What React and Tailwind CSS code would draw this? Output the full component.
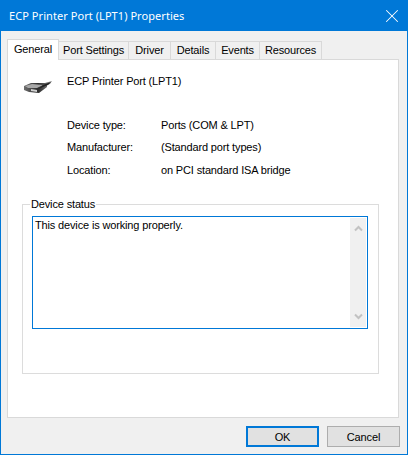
import { X } from "lucide-react";

const TABS = ["Port Settings", "Driver", "Details", "Events", "Resources"];
const TAB_WIDTHS = ["w-[70px]", "w-[42px]", "w-[45px]", "w-[44px]", "w-[62px]"];
const INFO = [
  ["Device type:", "Ports (COM & LPT)"],
  ["Manufacturer:", "(Standard port types)"],
  ["Location:", "on PCI standard ISA bridge"],
];

function PortIcon() {
  return (
    <svg width="32" height="32" viewBox="0 0 32 32" className="shrink-0">
      <defs>
        <linearGradient id="side" x1="0" y1="0" x2="1" y2="0">
          <stop offset="0" stopColor="#6e6e6e" />
          <stop offset="0.5" stopColor="#2c2c2c" />
          <stop offset="1" stopColor="#8a8a8a" />
        </linearGradient>
      </defs>
      <path d="M1 12 L8 9 L22 9 L29 7 L27 10 L24 11 L24 13 L16 19 L6 18 L1 16 Z" fill="url(#side)" />
      <path d="M2 12 L9 10 L20 11 L14 14 L5 14 Z" fill="#a8a8a8" />
      <path d="M20 11 L28 8 L25 11 L15 15 Z" fill="#222" />
      <path d="M8 15 L14 16 L14 18 L8 17 Z" fill="#d0d0d0" />
    </svg>
  );
}

export default function App() {
  return (
    <div className="w-[408px] h-[455px] flex flex-col bg-[#f0f0f0] border border-[#0078d7] font-['Liberation_Sans',Arial,sans-serif] text-[11px] leading-[16px] tracking-[-0.15px] text-black overflow-hidden">
      <div className="h-[30px] shrink-0 flex items-center justify-between bg-[#0078d7] text-white pl-[8px] pr-[4px]">
        <span className="font-['Noto_Sans',sans-serif] tracking-[0.06px]">ECP Printer Port (LPT1) Properties</span>
        <X size={22} strokeWidth={1.1} />
      </div>

      <div className="flex items-end pl-[6px] h-[28px] shrink-0">
        <div className="w-[52px] h-[21px] -mb-px z-10 flex items-start justify-center pt-[1px] bg-white border border-b-0 border-[#d9d9d9]">General</div>
        {TABS.map((t, i) => (
          <div key={t} className={`${TAB_WIDTHS[i]} h-[18px] pb-px flex items-center justify-center whitespace-nowrap border border-l-0 border-b-0 border-[#d9d9d9]`}>{t}</div>
        ))}
      </div>

      <div className="ml-[6px] w-[392px] h-[359px] shrink-0 bg-white border border-[#d9d9d9] pl-[14px] pt-[14px]">
        <div className="flex gap-[12px] ml-[1px]">
          <PortIcon />
          <span className="-mt-[1px]">ECP Printer Port (LPT1)</span>
        </div>

        <div className="mt-[11px] ml-[45px] flex flex-col gap-[6px]">
          {INFO.map(([k, v]) => (
            <div key={k} className="flex last:mt-px">
              <span className="w-[94px]">{k}</span>
              <span>{v}</span>
            </div>
          ))}
        </div>

        <fieldset className="mt-[18px] w-[357px] h-[178px] border border-[#dcdcdc] pl-[9px]">
          <legend className="-ml-[2px] px-[1px]">Device status</legend>
          <div className="w-[336px] h-[113px] mt-[4px] flex border border-[#0078d7] bg-white p-px">
            <div className="flex-1 pl-[1px] -mt-[1px]">This device is working properly.</div>
            <div className="w-[16px] bg-[#f0f0f0] flex flex-col items-center justify-between py-[7px]">
              <svg width="9" height="7" viewBox="0 0 9 7"><path d="M1 5.5 L4.5 2 L8 5.5" fill="none" stroke="#c2c2c2" strokeWidth="2" /></svg>
              <svg width="9" height="7" viewBox="0 0 9 7"><path d="M1 1.5 L4.5 5 L8 1.5" fill="none" stroke="#c2c2c2" strokeWidth="2" /></svg>
            </div>
          </div>
        </fieldset>
      </div>

      <div className="flex justify-end gap-[8px] pr-[7px] pt-[8px]">
        <button className="w-[73px] h-[21px] flex items-center justify-center bg-[#e1e1e1] border-2 border-[#0078d7]">OK</button>
        <button className="w-[73px] h-[21px] flex items-center justify-center bg-[#e1e1e1] border border-[#adadad]">Cancel</button>
      </div>
    </div>
  );
}
